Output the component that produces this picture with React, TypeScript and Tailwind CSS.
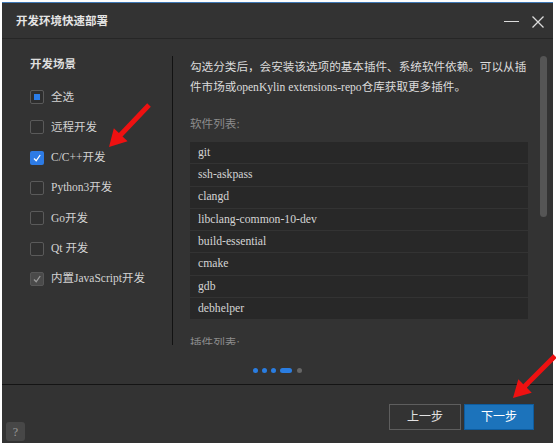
import React from "react";

const FONT = { fontFamily: '"Liberation Serif", "Noto Sans CJK SC", serif' };

type Pt = [number, number];

function arrowPoints(tail: Pt, tip: Pt, shaft = 5, headLen = 17, headW = 19) {
  const dx = tip[0] - tail[0];
  const dy = tip[1] - tail[1];
  const len = Math.hypot(dx, dy);
  const ux = dx / len;
  const uy = dy / len;
  const nx = -uy;
  const ny = ux;
  const bx = tip[0] - ux * headLen;
  const by = tip[1] - uy * headLen;
  const pts: Pt[] = [
    [tail[0] + (nx * shaft) / 2, tail[1] + (ny * shaft) / 2],
    [bx + (nx * shaft) / 2, by + (ny * shaft) / 2],
    [bx + (nx * headW) / 2, by + (ny * headW) / 2],
    [tip[0], tip[1]],
    [bx - (nx * headW) / 2, by - (ny * headW) / 2],
    [bx - (nx * shaft) / 2, by - (ny * shaft) / 2],
    [tail[0] - (nx * shaft) / 2, tail[1] - (ny * shaft) / 2],
  ];
  return pts.map((p) => p.join(",")).join(" ");
}

function Check({ color }: { color: string }) {
  return (
    <svg width="10" height="10" viewBox="0 0 10 10">
      <polyline points="2,5.5 4.2,7.8 8.2,2" fill="none" stroke={color} strokeWidth="1.3" />
    </svg>
  );
}

type State = "partial" | "none" | "checked" | "disabled";

function Box({ state }: { state: State }) {
  if (state === "checked")
    return (
      <div className="w-[14px] h-[14px] rounded-[2px] bg-[#2d7be5] flex items-center justify-center">
        <Check color="#ffffff" />
      </div>
    );
  if (state === "disabled")
    return (
      <div className="w-[14px] h-[14px] rounded-[2px] bg-[#4a4a4a] border border-[#575757] flex items-center justify-center">
        <Check color="#9a9a9a" />
      </div>
    );
  if (state === "partial")
    return (
      <div className="w-[14px] h-[14px] rounded-[2px] border border-[#5a5a5a] bg-[#2e2e2e] flex items-center justify-center">
        <div className="w-[6px] h-[6px] bg-[#2b7de9]" />
      </div>
    );
  return <div className="w-[14px] h-[14px] rounded-[2px] border border-[#5a5a5a] bg-[#303030]" />;
}

const scenes: { label: string; state: State }[] = [
  { label: "全选", state: "partial" },
  { label: "远程开发", state: "none" },
  { label: "C/C++开发", state: "checked" },
  { label: "Python3开发", state: "none" },
  { label: "Go开发", state: "none" },
  { label: "Qt 开发", state: "none" },
  { label: "内置JavaScript开发", state: "disabled" },
];

const software = [
  "git",
  "ssh-askpass",
  "clangd",
  "libclang-common-10-dev",
  "build-essential",
  "cmake",
  "gdb",
  "debhelper",
];

export default function App() {
  return (
    <div className="relative w-[556px] h-[445px] bg-white overflow-hidden" style={FONT}>
      <div className="ml-[2px] mt-[2px] w-[551px] h-[441px] bg-[#333333] border-t border-[#3f78b5] flex flex-col">
        {/* Title bar */}
        <div className="h-[36px] pt-[2px] flex items-center justify-between border-b border-[#262626] shrink-0">
          <div className="pl-[14px] text-[11.5px] font-bold text-[#e4e4e4]">开发环境快速部署</div>
          <div className="flex items-center pr-[9px] gap-[13px]">
            <div className="w-[15px] h-[1.5px] bg-[#dcdcdc]" />
            <svg width="12" height="12" viewBox="0 0 12 12">
              <path d="M0.5 0.5 L11.5 11.5 M11.5 0.5 L0.5 11.5" stroke="#dcdcdc" strokeWidth="1.3" />
            </svg>
          </div>
        </div>

        {/* Body */}
        <div className="h-[345px] flex flex-col pt-[17px] shrink-0">
          <div className="h-[289px] flex">
            {/* Left panel */}
            <div className="w-[170px] pl-[28px] pt-[1px]">
              <div className="text-[11.5px] leading-[14px] font-bold text-[#dedede]">开发场景</div>
              <div className="mt-[11px] flex flex-col">
                {scenes.map((s) => (
                  <div key={s.label} className="h-[30.3px] flex items-center gap-[7px]">
                    <Box state={s.state} />
                    <span className="text-[11.5px] text-[#d2d2d2]">{s.label}</span>
                  </div>
                ))}
              </div>
            </div>
            <div className="w-px h-full bg-[#121212]" />
            {/* Right panel */}
            <div className="relative flex-1 h-full overflow-hidden pl-[17px] pt-[2px]">
              <div className="w-[342px]">
                <p className="text-[11.6px] leading-[20px] text-[#dcdcdc]">
                  勾选分类后，会安装该选项的基本插件、系统软件依赖。可以从插件市场或openKylin extensions-repo仓库获取更多插件。
                </p>
                <div className="mt-[17px] text-[11.6px] leading-[20px] text-[#8c8c8c]">软件列表:</div>
                <div className="mt-[7px] w-[338px] flex flex-col gap-px">
                  {software.map((s) => (
                    <div key={s} className="h-[21.3px] bg-[#282828] flex items-center pl-[8px] text-[11.7px] text-[#d4d4d4]">
                      {s}
                    </div>
                  ))}
                </div>
                <div className="mt-[15px] text-[11.6px] leading-[20px] text-[#8c8c8c]">插件列表:</div>
              </div>
              <div className="absolute right-[6px] top-0 w-[7px] h-[161px] rounded-full bg-[#555555]" />
            </div>
          </div>
          {/* pager dots */}
          <div className="pt-[23px] flex justify-center items-center gap-[4px]">
            <div className="w-[5px] h-[5px] rounded-full bg-[#2a7de1]" />
            <div className="w-[5px] h-[5px] rounded-full bg-[#2a7de1]" />
            <div className="w-[5px] h-[5px] rounded-full bg-[#2a7de1]" />
            <div className="w-[12px] h-[5px] rounded-full bg-[#2a7de1]" />
            <div className="ml-[1px] w-[5px] h-[5px] rounded-full bg-[#666666]" />
          </div>
        </div>

        {/* Footer */}
        <div className="flex-1 border-t border-[#141414] flex justify-between">
          <div className="self-end mb-[2px] ml-[4px] w-[19px] h-[19px] rounded-[3px] bg-[#474747] flex items-center justify-center text-[12px] text-[#9a9a9a]">
            ?
          </div>
          <div className="self-start mt-[19px] mr-[19px] flex gap-[3px]">
            <div className="w-[72px] h-[26px] border border-[#5e5e5e] flex items-center justify-center text-[12px] text-[#e2e2e2]">
              上一步
            </div>
            <div className="w-[70px] h-[26px] bg-[#1c73bb] border border-[#0e5c9e] flex items-center justify-center text-[12px] text-white">
              下一步
            </div>
          </div>
        </div>
      </div>

      {/* Red annotation arrows */}
      <svg className="absolute left-0 top-0 pointer-events-none" width="556" height="445">
        <polygon points={arrowPoints([149, 105], [109, 147])} fill="#ee1111" />
        <polygon points={arrowPoints([555, 356], [513, 398])} fill="#ee1111" />
      </svg>
    </div>
  );
}
